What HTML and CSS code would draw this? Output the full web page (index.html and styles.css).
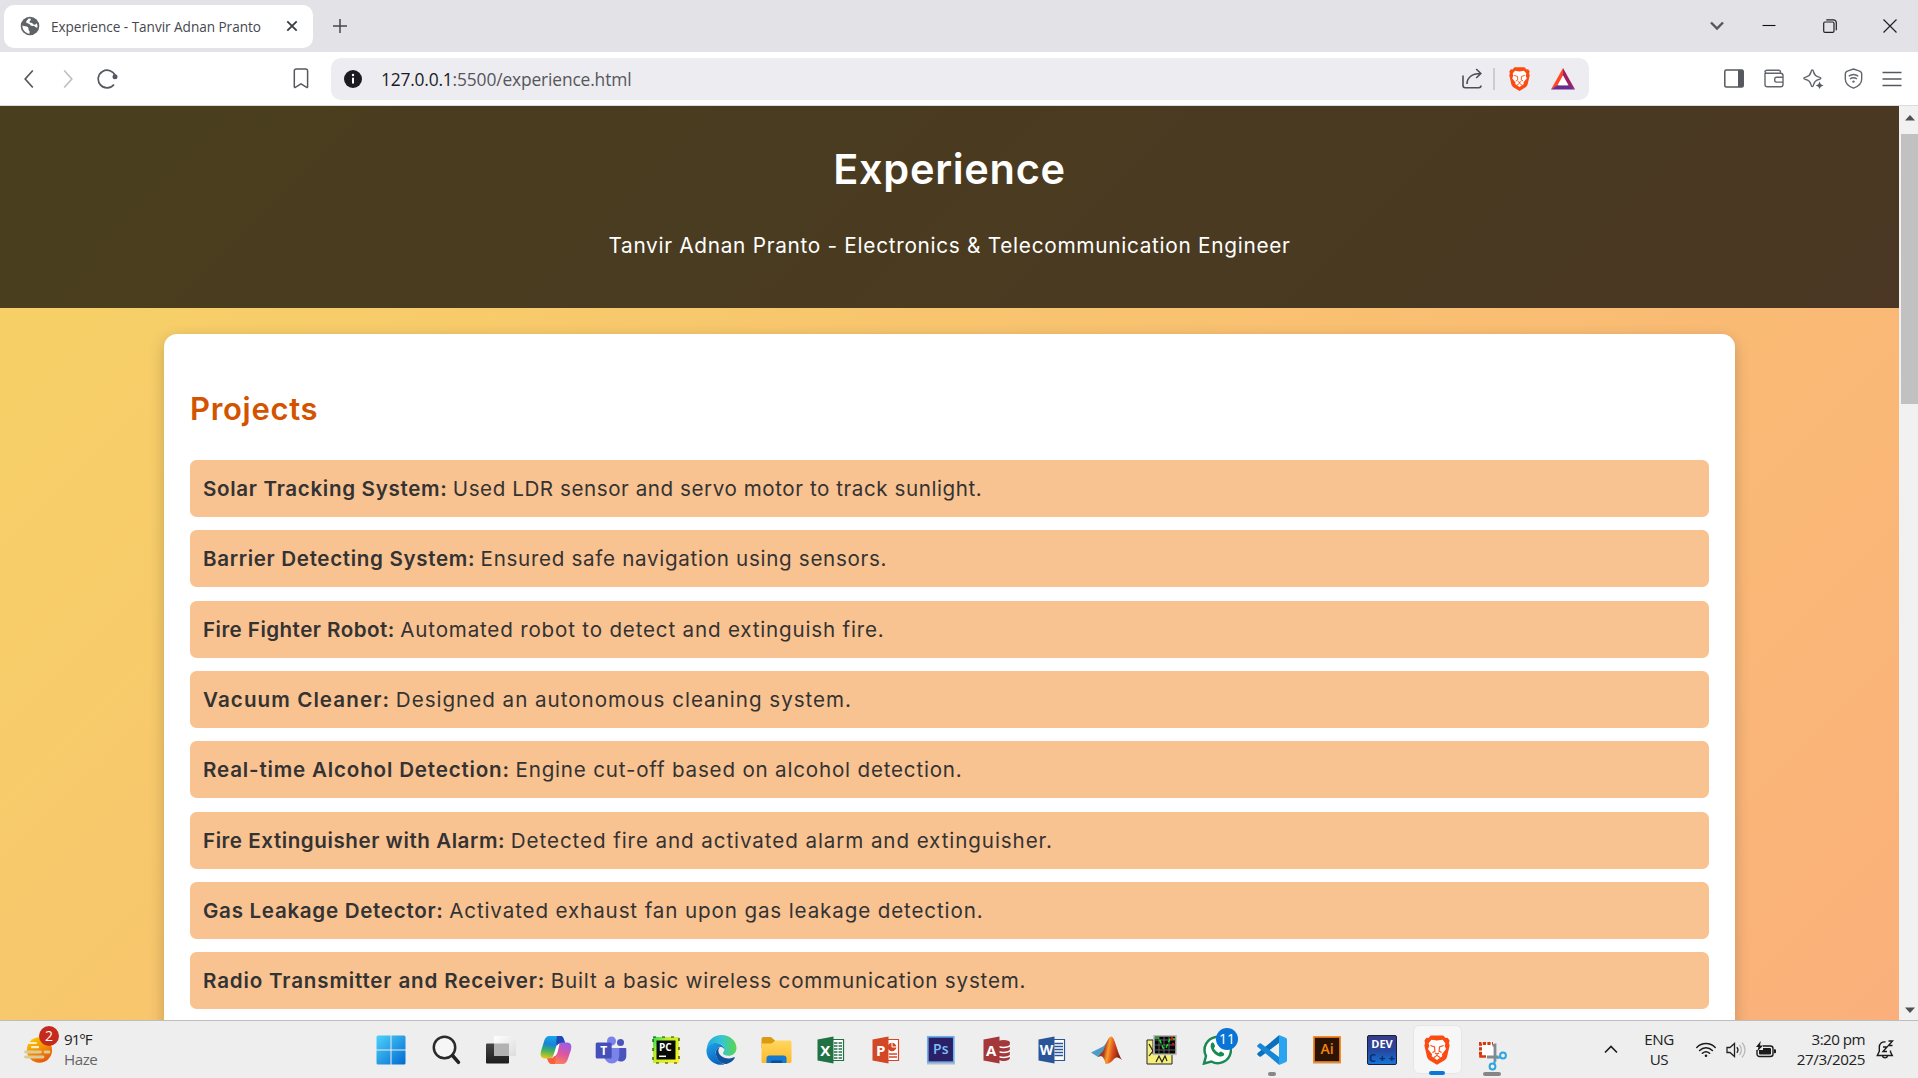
FILE: index.html
```html
<!DOCTYPE html>
<html lang="en">
<head>
<meta charset="utf-8">
<title>Experience - Tanvir Adnan Pranto</title>
<link rel="stylesheet" href="styles.css">
</head>
<body>
<div class="tabstrip">
  <div class="tab">
    <svg width="20" height="20" viewBox="0 0 20 20"><circle cx="10" cy="10" r="9.3" fill="#5f6368"/><path d="M2.400 9.500c2 .8 4 .4 5.400 1.600 1.300 1.300.2 2.400 1.200 3.400.8.800.8 1.800.3 3.200C5.500 17.200 2.200 14 2.400 9.500zM8.500 2.600c-.6 1.600-2.300 1.800-2.300 3.300 0 1.700 2.700 1 3.500 2.400.7 1.200 1.800 1.900 3.300 1.600 1.300-.3 1.500.9 2.800 1.400.6.300 1.300.2 1.700-.1.400-4.200-3.300-8.800-9-8.600z" fill="#fff"/><path d="M11.500 1.500c-1.200 1.300-.2 2.600-1.500 3.500-1 .8-.2 2 1 1.800 1.600-.2 1.600 1.600 3 1.800 1.700.3 2.400-1.100 3.500-2.200z" fill="#5f6368"/></svg>
    <span class="tab-title">Experience - Tanvir Adnan Pranto</span>
    <svg class="tab-close" width="12" height="12" viewBox="0 0 12 12"><path d="M1.300 1.300l9.400 9.400M10.700 1.300L1.300 10.700" stroke="#3c4043" stroke-width="1.900"/></svg>
  </div>
  <svg class="newtab" width="14" height="14" viewBox="0 0 14 14"><path d="M7 0v14M0 7h14" stroke="#47484d" stroke-width="1.500"/></svg>
  <div class="window-controls">
    <svg width="14" height="10" viewBox="0 0 14 10"><path d="M1 1.500l6 6 6-6" fill="none" stroke="#55575d" stroke-width="2.400"/></svg>
    <svg width="14" height="14" viewBox="0 0 14 14"><path d="M.5 6.500h13" stroke="#111" stroke-width="1.100"/></svg>
    <svg width="14" height="14" viewBox="0 0 14 14" fill="none" stroke="#222" stroke-width="1.200"><rect x=".7" y="3" width="10.300" height="10.300" rx="1.300"/><path d="M3.300.8h7.200a2.800 2.800 0 0 1 2.800 2.800v7.600"/></svg>
    <svg width="14" height="14" viewBox="0 0 14 14"><path d="M.5.5l13 13M13.500.5l-13 13" stroke="#222" stroke-width="1.200"/></svg>
  </div>
</div>

<div class="toolbar">
  <div class="nav">
    <svg width="10" height="20" viewBox="0 0 10 20"><path d="M8.800 1.500L1.200 10l7.600 8.500" fill="none" stroke="#55585e" stroke-width="1.700"/></svg>
    <svg width="10" height="20" viewBox="0 0 10 20"><path d="M1.200 1.500L8.800 10l-7.600 8.500" fill="none" stroke="#bfc0c4" stroke-width="1.700"/></svg>
    <svg width="22" height="20" viewBox="0 0 22 20"><path d="M17 15.400A8.800 8.800 0 1 1 18.300 7" fill="none" stroke="#55585e" stroke-width="1.700"/><circle cx="18" cy="7.800" r="2.500" fill="#55585e"/></svg>
    <svg class="bookmark" width="16" height="21" viewBox="0 0 16 21"><path d="M1.300 19V3A1.900 1.900 0 0 1 3.200 1h9.500a1.900 1.900 0 0 1 1.900 2v16l-.6.600L8 15.800 1.900 19.600z" fill="none" stroke="#55585e" stroke-width="1.500"/></svg>
  </div>
  <div class="urlbar">
    <svg width="18" height="18" viewBox="0 0 18 18"><circle cx="9" cy="9" r="9" fill="#1b1b22"/><path d="M9 7.800v5.600" stroke="#fff" stroke-width="2"/><circle cx="9" cy="5" r="1.200" fill="#fff"/></svg>
    <span class="url"><span class="host">127.0.0.1</span><span class="path">:5500/experience.html</span></span>
    <div class="url-actions">
      <svg width="21" height="21" viewBox="0 0 21 21" fill="none" stroke="#4c4f56" stroke-width="1.600"><path d="M1 7.500v10a2.200 2.200 0 0 0 2.200 2.200h13.600a2.200 2.200 0 0 0 2.200-2.200M5 16c0-6 4.500-10.500 13.500-10.500M14.200 1l4.600 4.500-4.600 4.500"/></svg>
      <i class="sep"></i>
      <svg class="brave" width="21" height="24" viewBox="0 0 21 24"><use href="#lion"/></svg>
      <svg width="24" height="22" viewBox="0 0 24 22"><path d="M12 0L0 21.500l8-4L12 8z" fill="#ff4724"/><path d="M12 0l12 21.500-7.500-4L12 8z" fill="#9e1f63"/><path d="M0 21.500h24l-6.500-4.200H6.500z" fill="#662d91"/><path d="M12 7.500l5.500 9.800h-11z" fill="#fff"/></svg>
    </div>
  </div>
  <div class="extensions">
    <svg width="20" height="19" viewBox="0 0 20 19"><rect x=".8" y="1" width="18.400" height="17" rx="1.500" fill="none" stroke="#55585e" stroke-width="1.500"/><path d="M14 1h4a1.500 1.500 0 0 1 1.500 1.500v14A1.500 1.500 0 0 1 18 18h-4z" fill="#55585e"/></svg>
    <svg width="20" height="19" viewBox="0 0 20 19" fill="none" stroke="#62656b" stroke-width="1.400"><path d="M1 4v11.500A2.300 2.300 0 0 0 3.300 17.800h13.400a2.300 2.300 0 0 0 2.300-2.300v-9A2.300 2.300 0 0 0 16.700 4.200H3A2 2 0 0 1 1 2.800C1 1.600 2 1.200 3 1.200h11.500a2 2 0 0 1 2 2v1M19 8.300h-6.500a1.800 1.800 0 0 0-1.800 1.800v1.200a1.800 1.800 0 0 0 1.800 1.800H19"/></svg>
    <svg width="21" height="20" viewBox="0 0 21 20"><path d="M9.300 1c.9 0 1 .8 1.300 2 .8 3 1.600 4 4.600 4.900 1.700.5 2.700.6 2.700 1.400s-1 .9-2.700 1.400c-3 .9-3.800 1.900-4.600 4.900-.3 1.200-.4 2-1.300 2s-1-.8-1.300-2c-.8-3-1.600-4-4.600-4.900C1.700 10.200.8 10.100.8 9.300s.9-.9 2.600-1.400c3-.9 3.800-1.900 4.600-4.900.3-1.200.4-2 1.300-2z" fill="none" stroke="#62656b" stroke-width="1.400"/><path d="M16.600 12.500l1.100 2.800 2.900 1.200-2.900 1.200-1.100 2.300-1.200-2.300-2.600-1.200 2.600-1.200z" fill="#55585e"/></svg>
    <svg width="19" height="21" viewBox="0 0 19 21" fill="none" stroke="#62656b" stroke-width="1.400"><path d="M9.500 1l5.500 1.800c2 .6 2.700 1 2.700 3V11c0 5-4.500 7.800-8.200 9.200C5.800 18.800 1.300 16 1.300 11V5.800c0-2 .7-2.400 2.700-3z"/><path d="M4.700 8.300c3-2.300 6.600-2.300 9.600 0M6 11c2.300-1.600 4.700-1.600 7 0"/><circle cx="9.500" cy="13.600" r="1.200" fill="#62656b" stroke="none"/></svg>
    <svg width="20" height="16" viewBox="0 0 20 16"><path d="M.5 1.500h19M.5 8h19M.5 14.500h19" stroke="#55585e" stroke-width="1.500"/></svg>
  </div>
</div>

<div class="viewport">
  <main class="page">
    <header class="hero">
      <h1>Experience</h1>
      <p>Tanvir Adnan Pranto - Electronics &amp; Telecommunication Engineer</p>
    </header>
    <section class="card">
      <h2>Projects</h2>
      <ul class="projects">
        <li class="solar"><strong>Solar Tracking System:</strong> Used LDR sensor and servo motor to track sunlight.</li>
        <li class="barrier"><strong>Barrier Detecting System:</strong> Ensured safe navigation using sensors.</li>
        <li class="robot"><strong>Fire Fighter Robot:</strong> Automated robot to detect and extinguish fire.</li>
        <li class="vacuum"><strong>Vacuum Cleaner:</strong> Designed an autonomous cleaning system.</li>
        <li class="alcohol"><strong>Real-time Alcohol Detection:</strong> Engine cut-off based on alcohol detection.</li>
        <li class="alarm"><strong>Fire Extinguisher with Alarm:</strong> Detected fire and activated alarm and extinguisher.</li>
        <li class="gas"><strong>Gas Leakage Detector:</strong> Activated exhaust fan upon gas leakage detection.</li>
        <li class="radio"><strong>Radio Transmitter and Receiver:</strong> Built a basic wireless communication system.</li>
      </ul>
    </section>
  </main>
  <div class="scrollbar">
    <svg width="10" height="6" viewBox="0 0 10 6"><path d="M0 5.500L5 0l5 5.500z" fill="#505050"/></svg>
    <div class="thumb"></div>
    <svg class="down" width="10" height="6" viewBox="0 0 10 6"><path d="M0 .5L5 6l5-5.500z" fill="#505050"/></svg>
  </div>
</div>

<footer class="taskbar">
  <div class="weather">
    <div class="sun">
      <svg width="28" height="28" viewBox="0 0 28 28"><defs><linearGradient id="sung" x1="0" y1="0" x2=".6" y2="1"><stop offset="0" stop-color="#ffd400"/><stop offset="1" stop-color="#e8590c"/></linearGradient></defs><circle cx="15.500" cy="14" r="12.700" fill="url(#sung)"/><path d="M5 7h7M8 11.200h6" stroke="#f8eec4" stroke-width="2.200" stroke-linecap="round"/><path d="M1.500 16h15M21 16h4M1.500 21H19" stroke="#dccb98" stroke-width="2.800" stroke-linecap="round"/></svg>
      <b class="badge">2</b>
    </div>
    <div class="weather-text"><span class="temp">91°F</span><span class="haze">Haze</span></div>
  </div>

  <div class="apps">
    <div class="app"><svg width="30" height="30" viewBox="0 0 30 30"><defs><linearGradient id="win" gradientUnits="userSpaceOnUse" x1="0" y1="0" x2="30" y2="30"><stop offset="0" stop-color="#4fd4fb"/><stop offset="1" stop-color="#0068d0"/></linearGradient></defs><path d="M2 .5h12.500v14H.5V2A1.500 1.500 0 0 1 2 .5zM15.500.5H28A1.500 1.500 0 0 1 29.500 2v12.500h-14zM.5 15.500h14v14H2A1.500 1.500 0 0 1 .5 28zM15.500 15.500h14V28a1.500 1.500 0 0 1-1.500 1.500H15.500z" fill="url(#win)"/></svg></div>
    <div class="app"><svg width="30" height="30" viewBox="0 0 30 30"><circle cx="13.500" cy="12.500" r="10.700" fill="#f6f6f6" stroke="#2b2b2b" stroke-width="2.500"/><path d="M21.500 20.500l6 6.800" stroke="#222" stroke-width="3.500" stroke-linecap="round"/></svg></div>
    <div class="app"><svg width="32" height="30" viewBox="0 0 32 30"><defs><linearGradient id="tv" x1="0" y1="0" x2="0" y2="1"><stop offset="0" stop-color="#454545"/><stop offset="1" stop-color="#1c1c1c"/></linearGradient><linearGradient id="tv2" x1="0" y1="0" x2="1" y2="1"><stop offset="0" stop-color="#fff"/><stop offset="1" stop-color="#dcdcdc"/></linearGradient></defs><rect x="1" y="8.500" width="23" height="20" rx="1" fill="url(#tv)"/><rect x="9" y="1" width="22" height="20" rx="1" fill="url(#tv2)"/><path d="M9 8.500h15V21H10a1 1 0 0 1-1-1z" fill="#b2b2b2"/></svg></div>
    <div class="app"><svg width="32" height="30" viewBox="0 0 32 30"><defs><linearGradient id="cpa" x1=".3" y1="0" x2=".15" y2="1"><stop offset="0" stop-color="#18a5e8"/><stop offset=".35" stop-color="#1783d8"/><stop offset=".65" stop-color="#45b558"/><stop offset="1" stop-color="#f5c51a"/></linearGradient><linearGradient id="cpb" x1=".7" y1="0" x2=".3" y2="1"><stop offset="0" stop-color="#9b5ce5"/><stop offset=".5" stop-color="#e0569d"/><stop offset="1" stop-color="#ff8a4a"/></linearGradient></defs><path d="M10 1h10c2.500 0 3.300 1.500 4 4l1 3h-4c-3 0-4 1-5 4l-2.500 8c-.8 2.500-2 3.500-4.500 3.500H5c-4.500 0-5-4-3.800-8L4 6.500C5 3 6.500 1 10 1z" fill="url(#cpa)"/><path d="M17 1h3.500c2.500 0 3 2 4 5l.7 2.500H21c-2 0-3 .8-4 2.500-1-2-1-6 0-10z" fill="#1f49b8"/><path d="M22 29H12c-2.500 0-3.300-1.500-4-3.500l-.8-2h3c3 0 4-1.500 5-4l3-8c.8-2.500 2-4 4.500-4H27c4.500 0 5 4 3.800 8L28 23.500C27 27 25.500 29 22 29z" fill="url(#cpb)"/><path d="M7.200 23.300h3.500c2 0 3.500-1 4.500-3 .8 3 .4 6.500-.2 8.700h-3c-2.500 0-3.500-1.500-4-3.500z" fill="#f4633e"/><path d="M19.500 8.500c-2 .8-3 3-3.700 5.500L13.500 21h1.700c1.300-1 2-3 2.600-4.500z" fill="#fff"/></svg></div>
    <div class="app"><svg width="32" height="28" viewBox="0 0 32 28"><circle cx="25.500" cy="6.500" r="3.500" fill="#4b53bc"/><path d="M22 12h8.500a.8.800 0 0 1 .8.800V20c0 3-2 5.500-5 5.500S21 24 21 20z" fill="#4b53bc"/><circle cx="16.500" cy="5" r="4.500" fill="#7b83eb"/><path d="M10 12h13.500a.8.800 0 0 1 .8.800V20a7.300 7.300 0 0 1-15 0z" fill="#7b83eb"/><rect x=".7" y="6.500" width="16" height="16" rx="1.500" fill="#464eb8"/><text x="8.700" y="19" font-size="12" class="glyph-label">T</text></svg></div>
    <div class="app"><svg width="28" height="28" viewBox="0 0 28 28"><defs><linearGradient id="pc" x1="0" y1="0" x2="1" y2=".8"><stop offset="0" stop-color="#14e05a"/><stop offset=".35" stop-color="#b8ee22"/><stop offset="1" stop-color="#fcf51c"/></linearGradient></defs><rect x="1" y="1" width="26" height="26" fill="url(#pc)"/><rect x="1" y="1" width="26" height="26" fill="none" stroke="#28310a" stroke-width="1.200" stroke-dasharray="3 6"/><rect x="4.500" y="4.500" width="19" height="19" fill="#060b06"/><text x="13.300" y="14.500" font-size="10" class="glyph-label">PC</text><path d="M7 20.300h7" stroke="#fff" stroke-width="1.500"/></svg></div>
    <div class="app"><svg width="31" height="30" viewBox="0 0 31 30"><defs><linearGradient id="eg" x1="0" y1=".4" x2="1" y2=".4"><stop offset="0" stop-color="#25a9e0"/><stop offset=".5" stop-color="#34c6d2"/><stop offset="1" stop-color="#5bd64a"/></linearGradient><linearGradient id="eb" x1="0" y1="0" x2=".5" y2="1"><stop offset="0" stop-color="#1ea5e8"/><stop offset="1" stop-color="#0a63c0"/></linearGradient></defs><path d="M.8 13C2 5 8 0 15.500 0 24 0 30.500 6 30.500 13c0 5-4 7.800-8 7.800-3.500 0-5.500-1.200-5.500-2.500 0-1 1.300-1.500 1.300-4 0-3.500-3.300-6.300-8-6.300C6 8 2.500 10 .8 13z" fill="url(#eg)"/><path d="M.6 14C2 9.500 6 7.800 10.300 8c4.500.2 8 3 8 6.300-1-1.800-2.500-2.300-4-2.300-3 0-5 3-4.500 7 .6 5 4.500 9 8.700 10.500C8.500 31.500-.8 23.500.6 14z" fill="url(#eb)"/><path d="M9.800 18c0 5 4 11.500 10.700 11 3.500-.8 6.800-3.300 8.300-6 .3-.7-.3-1-1-.7-6.500 3-13.300-.2-15-4.500-1-2.500-.2-4.500 1.200-5.800C11.300 12.500 9.800 15 9.800 18z" fill="#11529c"/></svg></div>
    <div class="app"><svg width="31" height="28" viewBox="0 0 31 28"><defs><linearGradient id="fold" x1="0" y1="0" x2="0" y2="1"><stop offset="0" stop-color="#ffd75e"/><stop offset="1" stop-color="#fcb92c"/></linearGradient></defs><path d="M.5 3A2 2 0 0 1 2.500 1H10l4 3.500V12H.5z" fill="#dc9a12"/><path d="M.5 7.500h10l4-3H29a1.500 1.500 0 0 1 1.500 1.500v19.500A1.500 1.500 0 0 1 29 27H2A1.500 1.500 0 0 1 .5 25.500z" fill="url(#fold)"/><path d="M5.500 27v-4.500a3 3 0 0 1 3-3h14a3 3 0 0 1 3 3V27z" fill="#1479cf"/><path d="M10 27v-1.500a1 1 0 0 1 1-1h9a1 1 0 0 1 1 1V27z" fill="#0a4e9a"/></svg></div>
    <div class="app"><svg width="28" height="28" viewBox="0 0 28 28"><path d="M14 3.500h12.500v21H14z" fill="#fff" stroke="#207245" stroke-width="1.200"/><path d="M17 7h3.500m1 0H25M17 10h3.500m1 0H25M17 13h3.500m1 0H25M17 16h3.500m1 0H25M17 19h3.500m1 0H25M17 22h3.500m1 0H25" stroke="#207245" stroke-width="1.700"/><path d="M.5 3.500L16.500.5v27L.5 24.500z" fill="#207245"/><text x="8.300" y="19.500" font-size="15" class="glyph-label">X</text></svg></div>
    <div class="app"><svg width="28" height="28" viewBox="0 0 28 28"><path d="M14 3.500h12.500v21H14z" fill="#fff" stroke="#d24726" stroke-width="1.200"/><circle cx="20" cy="11" r="4.300" fill="#d24726"/><path d="M20 11V6.500M20 11h4.500" stroke="#fff"/><path d="M17 18h8M17 21h8" stroke="#d24726" stroke-width="1.500"/><path d="M.5 3.500L16.500.5v27L.5 24.500z" fill="#d24726"/><text x="8.800" y="19.500" font-size="15" class="glyph-label">P</text></svg></div>
    <div class="app"><svg width="30" height="30" viewBox="0 0 30 30"><path d="M1 28.500h28" stroke="#888" stroke-width="2" opacity=".5"/><rect x="1.800" y="1.800" width="26" height="25.400" fill="#2b1f66" stroke="#6cb0ee" stroke-width="1.700"/><text x="14.800" y="18.500" font-size="14" class="glyph-label ps">Ps</text></svg></div>
    <div class="app"><svg width="28" height="28" viewBox="0 0 28 28"><path d="M14.500 7v15c0 4 12.300 4 12.300 0V7" fill="#a4373a"/><ellipse cx="20.500" cy="6.500" rx="6.500" ry="2.600" fill="#a4373a"/><path d="M14 9.500c2 2.500 11 2.500 13 0M14 14.500c2 2.500 11 2.500 13 0M14 19.500c2 2.500 11 2.500 13 0" fill="none" stroke="#fff" stroke-width="1.500"/><path d="M.5 3.500L16.500.5v27L.5 24.500z" fill="#a4373a"/><text x="8.300" y="19.500" font-size="15" class="glyph-label">A</text></svg></div>
    <div class="app"><svg width="28" height="28" viewBox="0 0 28 28"><path d="M14 3.500h12.500v21H14z" fill="#fff" stroke="#2a5699" stroke-width="1.200"/><path d="M16.500 7.500H25M16.500 10.500H25M16.500 13.500H25M16.500 16.500H25M16.500 19.500H25" stroke="#2a5699" stroke-width="1.600"/><path d="M.5 3.500L16.500.5v27L.5 24.500z" fill="#2a5699"/><text x="8.500" y="19.200" font-size="14" class="glyph-label">W</text></svg></div>
    <div class="app"><svg width="31" height="28" viewBox="0 0 31 28"><defs><linearGradient id="ml" x1="0" y1="0" x2="1" y2=".2"><stop offset="0" stop-color="#58291a"/><stop offset=".35" stop-color="#b33a1b"/><stop offset=".5" stop-color="#f6a02c"/><stop offset=".7" stop-color="#dd4a1d"/><stop offset="1" stop-color="#7a1d0d"/></linearGradient></defs><path d="M0 16.500l10-5c3-1 5-4 7-8L14 16l-7 5z" fill="#4e9cc9"/><path d="M7 21c2-2 3-4 5-6 2-3 5-14.500 8-14.500 4 0 6 16 11 23.500-3-3-6-3.500-8-1-2 2-4 5-8.500 5-.5-4-2-7-4.500-8z" fill="url(#ml)"/></svg></div>
    <div class="app"><svg width="31" height="30" viewBox="0 0 31 30"><path d="M1 5h6v14h19v10H1z" fill="#f5f07a" stroke="#222"/><path d="M3 9l4 7-4 5M10 27l3-6 3 6 3-6 2 5" fill="none" stroke="#222" stroke-width="1.200"/><rect x="8" y=".8" width="22" height="18.500" fill="#050505" stroke="#bbb" stroke-width="1.600"/><path d="M13 1v18M18 1v18M23 1v18M8 5h22M8 10h22M8 15h22" stroke="#777" stroke-width=".8"/><path d="M9 3h4l4 10h3l4-9h5" fill="none" stroke="#17e02b" stroke-width="1.500" stroke-dasharray="4 2"/><path d="M26 2v3M27 8v2" stroke="red" stroke-width="2"/></svg></div>
    <div class="app"><svg width="30" height="30" viewBox="0 0 30 30"><path d="M2 28.500l2-7.500A13.200 13.200 0 1 1 9.300 26.500z" fill="#fff" stroke="#1a8a55" stroke-width="2.500"/><path d="M9.500 8c1-.8 2-.5 2.500.5l1 2.300c.4 1-.8 1.700-1.200 2.500 1.200 2.300 2.800 3.700 5 4.700.8-.4 1.500-1.700 2.500-1.300l2.200 1.200c1 .5.700 2-.1 2.900-4.900 3.700-15.900-6.800-11.900-12.800z" fill="#1a8a55"/></svg><b class="badge count">11</b></div>
    <div class="app"><svg width="30" height="30" viewBox="0 0 30 30"><path d="M22 .3V8L4 21.500a1.300 1.300 0 0 1-1.600 0l-1.700-1.600a1.200 1.200 0 0 1 0-1.800z" fill="#0a70bd"/><path d="M22 29.700V22L4 8.500a1.300 1.300 0 0 0-1.600 0L.7 10.100a1.200 1.200 0 0 0 0 1.800z" fill="#1687d6"/><path d="M22 0l6.700 2.800A2 2 0 0 1 30 4.600v20.800a2 2 0 0 1-1.300 1.800L22 30z" fill="#2aa4ee"/></svg><i class="running"></i></div>
    <div class="app"><svg width="30" height="30" viewBox="0 0 30 30"><path d="M1 28.200h28" stroke="#999" stroke-width="1.500" opacity=".5"/><rect x="2" y="2" width="26" height="25" fill="#2b1405" stroke="#f57c0c" stroke-width="1.700"/><text x="15" y="18.500" font-size="14" class="glyph-label ai">Ai</text></svg></div>
    <div class="app"><svg width="30" height="30" viewBox="0 0 30 30"><defs><linearGradient id="dev" x1="0" y1="0" x2="0" y2="1"><stop offset="0" stop-color="#3b3b88"/><stop offset=".5" stop-color="#27469c"/><stop offset="1" stop-color="#1476df"/></linearGradient></defs><rect x=".5" y=".5" width="29" height="29" rx="1.500" fill="url(#dev)" stroke="#14233c"/><text x="15" y="13" font-size="11" class="glyph-label">DEV</text><text x="15" y="27.200" font-size="11" textLength="26" class="glyph-label cpp">C++</text></svg></div>
    <div class="app active"><svg width="26" height="30" viewBox="0 0 21 24"><g id="lion"><path d="M5.500.3h10l2 2.100 1.600-.2 1.600 2.400-.6 1.700.6 2-2.100 9.200c-.3 1.200-1 2.100-2 2.800L10.500 24l-6.100-3.700c-1-.7-1.700-1.600-2-2.800L.3 8.300l.6-2-.6-1.700L1.900 2.200l1.600.2z" fill="#fb4a12"/><path d="M6 3.800l4.500.6 4.500-.6 2.300 2.700-.6 2.300 1.100 2.400-3.300 4.300.3 1.500-4.300 3-4.300-3 .3-1.500-3.300-4.300 1.100-2.400-.6-2.300z" fill="#fff"/><path d="M5.200 8.300l3.300 1.200.3 3.500-2 1M15.800 8.300l-3.300 1.200-.3 3.500 2 1M8.800 14.500l1.700.8 1.700-.8M10.500 15.300v1M7.800 18.300l2.700-2 2.700 2" fill="none" stroke="#fb4a12" stroke-width=".9"/></g></svg><i class="running"></i></div>
    <div class="app snip"><svg width="30" height="30" viewBox="0 0 30 30"><path d="M3 3h13v13H3z" fill="#fff"/><path d="M2.500 14V2.500H15" fill="none" stroke="#d53a0e" stroke-width="3" stroke-dasharray="3.200 1.400"/><path d="M2.500 14v1.500H8" fill="none" stroke="#d53a0e" stroke-width="2.600"/><path d="M14.500 4.500l2.500-.5v16.500M9 16h11.500" fill="none" stroke="#838b92" stroke-width="2.800"/><circle cx="25" cy="14.500" r="2.900" fill="none" stroke="#2da5dd" stroke-width="2"/><circle cx="14.500" cy="25.500" r="2.900" fill="none" stroke="#2da5dd" stroke-width="2"/><path d="M19 17l4-1M17 19.500l-1 4" stroke="#2da5dd" stroke-width="2"/></svg><i class="running wide"></i></div>
  </div>

  <div class="tray">
    <svg width="14" height="9" viewBox="0 0 14 9"><path d="M1 7.500l6-6 6 6" fill="none" stroke="#1b1b1b" stroke-width="1.600"/></svg>
    <div class="lang"><span>ENG</span><span>US</span></div>
    <div class="status">
      <svg width="20" height="16" viewBox="0 0 20 16" fill="none" stroke="#1b1b1b" stroke-width="1.500" stroke-linecap="round"><path d="M.8 5.500c5.200-5.200 13.200-5.200 18.400 0M3.600 8.500c3.700-3.700 9.100-3.700 12.800 0M6.400 11.300c2.200-2 5-2 7.200 0"/><circle cx="10" cy="13.700" r="1.300" fill="#1b1b1b" stroke="none"/></svg>
      <svg width="20" height="18" viewBox="0 0 20 18" fill="none" stroke="#222" stroke-width="1.300"><path d="M1 6.500h3L8.500 2.500v13L4 11.500H1zM10.800 6.200c1.300 1.500 1.300 4 0 5.500"/><path d="M13.500 4c2.400 2.800 2.400 7.200 0 10M16 1.500c4 4.300 4 10.700 0 15" stroke="#b8b8b8"/></svg>
      <svg width="20" height="17" viewBox="0 0 20 17"><rect x="1" y="5" width="16" height="10.500" rx="2.500" fill="none" stroke="#1b1b1b" stroke-width="1.400"/><rect x="3" y="7" width="12" height="6.500" rx="1" fill="#1b1b1b"/><path d="M18 8.300h1a1 1 0 0 1 1 1v2a1 1 0 0 1-1 1h-1z" fill="#1b1b1b"/><path d="M0 0h7v9H0z" fill="#eee"/><path d="M4.800 0L0 6h2.500L1.200 10.500 7.200 4.500H4z" fill="#1b1b1b"/></svg>
    </div>
    <div class="clock"><span class="time">3:20 pm</span><span class="date">27/3/2025</span></div>
    <svg width="18" height="19" viewBox="0 0 18 19"><path d="M9.500 2C6 1.300 3.300 3.800 3.300 7.300v4L1.300 15.500h15L14.500 12v-1.500" fill="none" stroke="#1b1b1b" stroke-width="1.400"/><path d="M6.500 16c.5 2.500 4.500 2.500 5 0" fill="none" stroke="#1b1b1b" stroke-width="1.400"/><path d="M7 7h4l-4 4.500h4M12.500 1h4l-4 4.500h4" fill="none" stroke="#1b1b1b" stroke-width="1.400"/></svg>
  </div>
</footer>
</body>
</html>
```
FILE: styles.css
```css
* { box-sizing: border-box; }
svg { display: block; flex: none; }

body {
  margin: 0;
  height: 1078px;
  overflow: hidden;
  display: flex;
  flex-direction: column;
  font-family: "Open Sans", "Noto Sans", sans-serif;
  background: #fff;
}

/* Browser chrome */
.tabstrip {
  flex: none;
  height: 52px;
  display: flex;
  align-items: center;
  padding-left: 4px;
  background: #e3e2e7;
}
.tab {
  width: 309px;
  height: 43px;
  display: flex;
  align-items: center;
  padding: 0 15.500px 0 16px;
  border-radius: 10px;
  background: #fff;
}
.tab-title {
  margin-left: 11px;
  font-size: 13.6px;
  line-height: 18px;
  padding-top: 1px;
  letter-spacing: -0.04px;
  color: #46484e;
  white-space: nowrap;
}
.tab-close { margin-left: auto; }
.newtab { margin-left: 20px; }
.window-controls {
  margin-left: auto;
  display: flex;
  align-items: center;
  gap: 46.500px;
  padding-right: 21px;
}
.window-controls svg:first-child { margin-right: -8px; }

.toolbar {
  flex: none;
  height: 54px;
  display: flex;
  align-items: center;
  border-bottom: 1px solid #dcdce0;
  background: #fff;
}
.nav {
  width: 331px;
  display: flex;
  align-items: center;
  gap: 29px;
  padding: 0 22px 0 24px;
}
.nav svg:nth-child(3) { margin-left: -5px; }
.nav .bookmark { margin-left: auto; }
.urlbar {
  width: 1258px;
  height: 42px;
  display: flex;
  align-items: center;
  padding: 0 14px 0 12.500px;
  border-radius: 10px;
  background: #edecf1;
}
.url {
  margin-left: 19.500px;
  font-size: 17.4px;
  color: #55575d;
  white-space: nowrap;
}
.host { color: #1b1b22; letter-spacing: -0.2px; }
.path { letter-spacing: -0.15px; }
.url-actions {
  margin-left: auto;
  display: flex;
  align-items: center;
}
.sep { width: 2px; height: 22px; margin-left: 10px; background: #cdccd2; }
.brave { margin: 0 21px 0 14.500px; }
.extensions {
  flex: 1;
  display: flex;
  align-items: center;
  justify-content: space-between;
  padding: 0 16px 0 135px;
}

/* Web page */
.viewport {
  flex: none;
  height: 914px;
  display: flex;
  overflow: hidden;
}
.page {
  width: 1899px;
  height: 2200px;
  flex: none;
  background: linear-gradient(135deg, #f6d365, #fda085);
  font-family: Inter, sans-serif;
  color: #333;
}
.hero {
  height: 202px;
  padding-top: 30px;
  background: rgba(0, 0, 0, 0.7);
  color: #fff;
  text-align: center;
}
.hero h1 {
  margin: 0;
  font-size: 41.5px;
  font-weight: 600;
  line-height: 66px;
  letter-spacing: 0.7px;
}
.hero p {
  margin: 27px 0 0;
  font-size: 20.8px;
  line-height: 34px;
  letter-spacing: 0.7px;
}
.card {
  width: 1571px;
  height: 1800px;
  margin: 26px auto 0;
  padding: 50px 26px 0;
  border-radius: 13px;
  background: #fff;
  box-shadow: 0 5px 16px rgba(0, 0, 0, 0.2);
}
.card h2 {
  margin: 0 0 26.100px;
  font-size: 31px;
  font-weight: 600;
  line-height: 50px;
  letter-spacing: 0.7px;
  color: #d35400;
}
.projects {
  margin: 0;
  padding: 0;
  display: flex;
  flex-direction: column;
  gap: 13.2px;
  list-style: none;
}
.projects li {
  height: 57.1px;
  padding: 0 13px;
  border-radius: 6.5px;
  background: #f9c291;
  font-size: 20.6px;
  line-height: 57px;
  white-space: nowrap;
}
.projects strong { margin-right: -1px; font-weight: 600; }
.solar { letter-spacing: 0.56px; }
.solar strong { letter-spacing: 0.67px; }
.barrier { letter-spacing: 0.69px; }
.barrier strong { letter-spacing: 0.65px; }
.robot { letter-spacing: 0.81px; }
.robot strong { letter-spacing: 0.45px; }
.vacuum { letter-spacing: 0.98px; }
.vacuum strong { letter-spacing: 1.08px; }
.alcohol { letter-spacing: 0.8px; }
.alcohol strong { letter-spacing: 0.81px; }
.alarm { letter-spacing: 0.91px; }
.alarm strong { letter-spacing: 0.55px; }
.gas { letter-spacing: 0.87px; }
.gas strong { letter-spacing: 0.69px; }
.radio { letter-spacing: 0.8px; }
.radio strong { letter-spacing: 0.83px; }

.scrollbar {
  flex: 1;
  display: flex;
  flex-direction: column;
  align-items: center;
  padding: 9px 0 7px 2px;
  background: #f1f1f1;
}
.thumb { width: 17px; height: 270px; margin-top: 13px; background: #c1c1c1; }
.scrollbar .down { margin-top: auto; }

/* Taskbar */
.taskbar {
  flex: none;
  height: 58px;
  display: flex;
  align-items: center;
  border-top: 1px solid #bdbdbd;
  background: #eee;
  font-size: 15.2px;
  line-height: 20px;
  color: #222;
}
.weather {
  width: 363px;
  display: flex;
  align-items: center;
  padding-left: 24px;
}
.sun { position: relative; }
.badge {
  position: absolute;
  top: -10px;
  left: 15px;
  width: 20px;
  height: 20px;
  border-radius: 50%;
  background: #c42b1c;
  color: #fff;
  font-size: 14px;
  font-weight: 400;
  line-height: 20px;
  text-align: center;
}
.weather-text {
  margin-left: 12px;
  padding-bottom: 2px;
  display: flex;
  flex-direction: column;
}
.temp { letter-spacing: -1px; }
.haze { letter-spacing: -0.5px; color: #666; }
.apps { display: flex; height: 57px; }
.app {
  position: relative;
  width: 55.1px;
  padding-top: 1px;
  display: flex;
  align-items: center;
  justify-content: center;
}
.app.active {
  width: 49px;
  margin: 4px 3px 4px 3.1px;
  border: 1px solid #e6e6e6;
  border-radius: 6px;
  background: #f7f7f7;
}
.snip svg { margin: 12px 0 0 2px; }
.badge.count {
  top: 7px;
  left: 26.5px;
  width: 22px;
  height: 22px;
  background: #0a74d6;
  line-height: 21px;
}
.running {
  position: absolute;
  bottom: 2px;
  left: calc(50% - 4px);
  width: 8px;
  height: 4px;
  border-radius: 2px;
  background: #868686;
}
.active .running { bottom: -2px; left: calc(50% - 8px); width: 16px; background: #0a78d6; }
.running.wide { left: calc(50% - 9px); width: 18px; }
.glyph-label {
  font-family: "Open Sans", sans-serif;
  font-weight: 700;
  fill: #fff;
  text-anchor: middle;
}
.glyph-label.ps { fill: #7cc0f8; font-weight: 600; }
.glyph-label.ai { fill: #f5820f; font-weight: 600; }
.glyph-label.cpp { fill: #0b2c6b; }
.tray {
  flex: 1;
  display: flex;
  align-items: center;
  justify-content: flex-end;
  padding-right: 24px;
}
.lang {
  width: 38px;
  margin: 0 18px 0 22px;
  padding-bottom: 1px;
  display: flex;
  flex-direction: column;
  align-items: center;
  letter-spacing: -0.5px;
}
.status { display: flex; align-items: center; gap: 10px; }
.clock {
  width: 89px;
  margin-right: 11px;
  padding-bottom: 1px;
  display: flex;
  flex-direction: column;
  align-items: flex-end;
}
.time { letter-spacing: -0.55px; }
.date { letter-spacing: -0.42px; }
```
